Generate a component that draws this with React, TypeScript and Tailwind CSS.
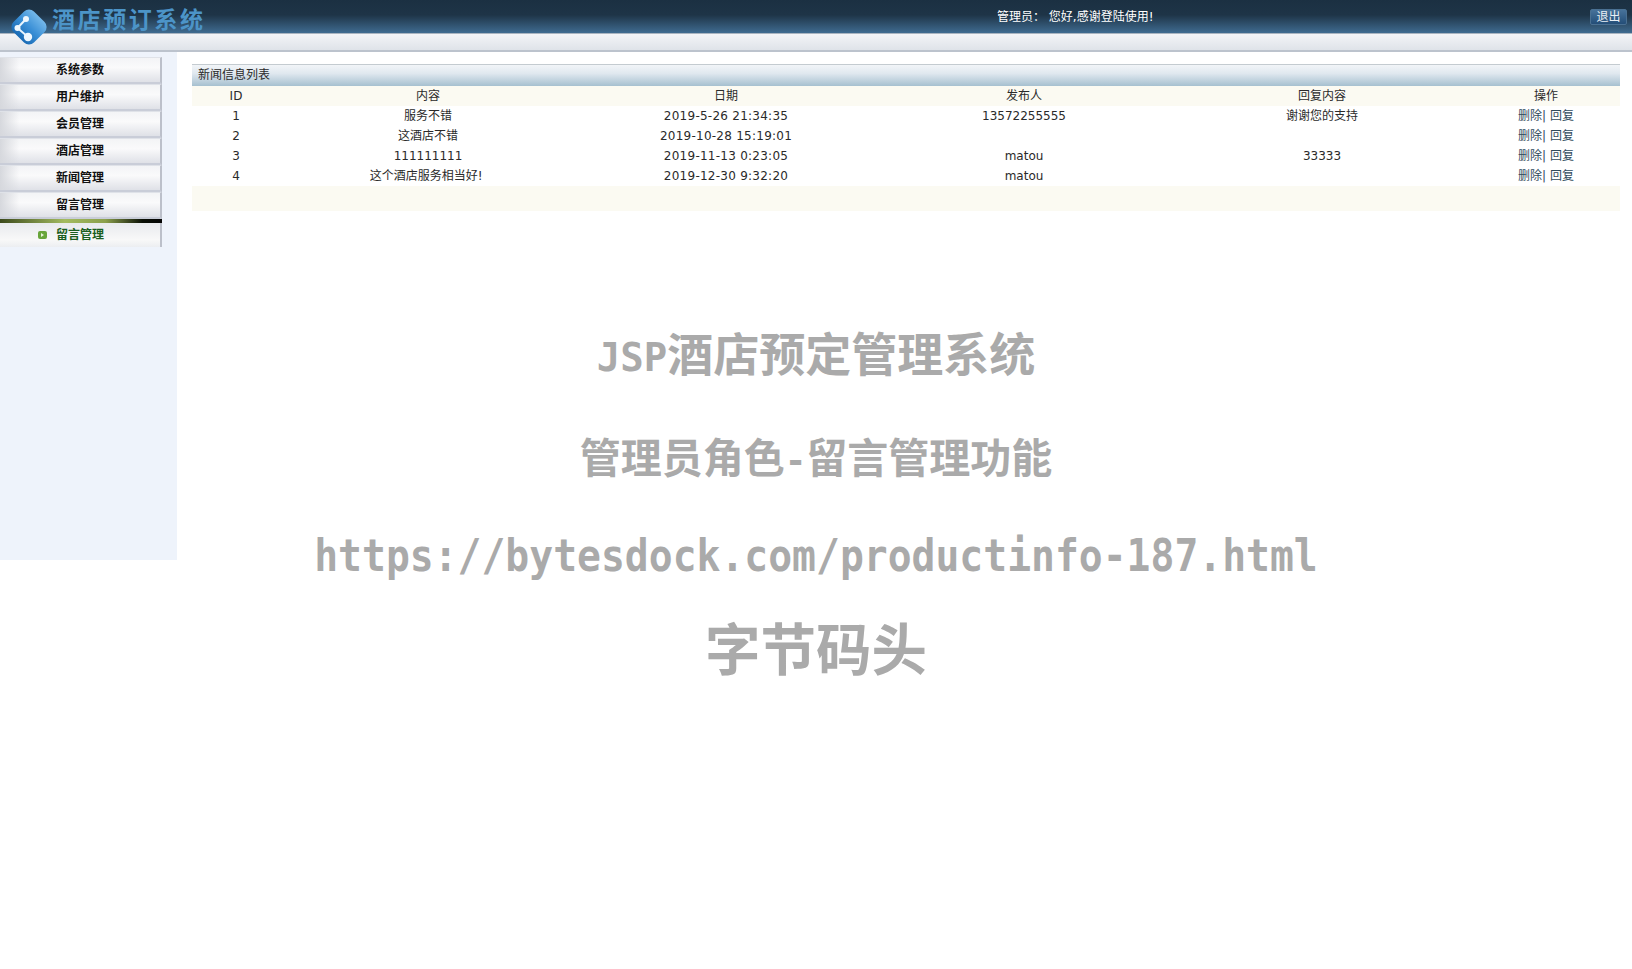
const cjk = "font-['DejaVu_Sans','Noto_Sans_CJK_SC',sans-serif]";
const mark = "font-['DejaVu_Sans_Mono','Noto_Sans_CJK_SC',monospace]";

const menuItems = ["系统参数", "用户维护", "会员管理", "酒店管理", "新闻管理", "留言管理"];

const rows = [
  { id: "1", content: "服务不错", date: "2019-5-26 21:34:35", author: "13572255555", reply: "谢谢您的支持" },
  { id: "2", content: "这酒店不错", date: "2019-10-28 15:19:01", author: "", reply: "" },
  { id: "3", content: "111111111", date: "2019-11-13 0:23:05", author: "matou", reply: "33333" },
  { id: "4", content: "这个酒店服务相当好!\u00a0", date: "2019-12-30 9:32:20", author: "matou", reply: "" },
];

const cols = "grid grid-cols-[88px_296px_300px_296px_300px_148px] text-center";

function Logo() {
  return (
    <svg width="40" height="40" viewBox="0 0 40 40" className="absolute left-[9px] top-[7px]">
      <defs>
        <linearGradient id="logoFill" x1="0" y1="0" x2="0" y2="1">
          <stop offset="0" stopColor="#74b8ea" />
          <stop offset="0.5" stopColor="#3a8fd6" />
          <stop offset="1" stopColor="#1a6bb5" />
        </linearGradient>
      </defs>
      <rect x="5.5" y="5.5" width="29" height="29" rx="7" transform="rotate(45 20 20)" fill="url(#logoFill)" />
      <path d="M17 12 L8.5 21 L19 30" stroke="#e8f4fd" strokeWidth="2" fill="none" />
      <circle cx="17" cy="12" r="3" fill="#eef7fe" />
      <circle cx="8.5" cy="21" r="3" fill="#eef7fe" />
      <circle cx="19" cy="30" r="4.2" fill="#eef7fe" />
    </svg>
  );
}

function Header() {
  return (
    <div className="relative">
      <div className="flex h-[33px] bg-[linear-gradient(#1b3042_0%,#1e3447_45%,#3f6b90_100%)]">
        <div className="w-[997px] pl-[52px] pt-[4px] font-['Noto_Sans_CJK_SC',sans-serif] text-[23px] font-bold leading-[28px] tracking-[2.6px] text-[#4c94c8]">
          酒店预订系统
        </div>
        <div className={`flex-1 pt-[9px] text-[12px] leading-[16px] text-white ${cjk}`}>
          管理员： 您好,感谢登陆使用!
        </div>
        <div className="pr-[5px] pt-[9px]">
          <div className={`flex h-[16px] w-[37px] items-center justify-center rounded-[2px] border border-[#4a7092] bg-[linear-gradient(#47729a,#244e78)] text-[12px] text-[#e8eef4] ${cjk}`}>
            退出
          </div>
        </div>
      </div>
      <div className="h-[19px] border-t border-[#a9b4c0] border-b-2 border-b-[#bcc3cd] bg-[linear-gradient(#f3f4f7,#dfe3e9)]" />
      <Logo />
    </div>
  );
}

function MenuButton({ label }: { label: string }) {
  return (
    <div className={`flex h-[27px] w-[162px] items-center justify-center border-t border-t-[#dfe2e8] border-r-2 border-r-[#bcc0ca] border-b-2 border-b-[#c9cdd8] bg-[linear-gradient(90deg,#d6d8dd,transparent_12%),linear-gradient(#f3f4f6,#fafafb_40%,#dfe1e7)] text-[12px] font-bold text-[#111] ${cjk}`}>
      {label}
    </div>
  );
}

function Sidebar() {
  return (
    <div className="h-[508px] w-[177px] shrink-0 bg-[#eef3fb] pt-[5px]">
      {menuItems.map((item) => (
        <MenuButton key={item} label={item} />
      ))}
      <div className="h-[4px] w-[162px] bg-[linear-gradient(90deg,#3c4a1c_0%,#a3bb60_40%,#8ba04c_65%,#0a0f05_88%,#050505_100%)]" />
      <div className={`relative flex h-[24px] w-[162px] items-center justify-center border-r-2 border-r-[#bcc0ca] bg-[linear-gradient(#e8eaee,#f8f8f8_70%,#eceef1)] text-[12px] font-bold text-[#1a5e20] ${cjk}`}>
        <span className="absolute left-[38px] top-[8px] h-[8px] w-[9px] rounded-[2px] bg-[#68a53a]">
          <span className="absolute left-[3px] top-[2px] h-0 w-0 border-y-[2px] border-l-[3px] border-y-transparent border-l-[#e8f3d8]" />
        </span>
        留言管理
      </div>
    </div>
  );
}

function NewsTable() {
  return (
    <div className={`ml-[15px] mt-[12px] w-[1428px] text-[12px] text-[#2a2a2a] ${cjk}`}>
      <div className="h-[22px] border-t border-[#c4cbd0] bg-[linear-gradient(#f2f5f8,#e0e8ef_40%,#a6c0d0_100%)] pl-[6px] leading-[20px]">
        新闻信息列表
      </div>
      <div className={`${cols} h-[20px] bg-[#fbfaf2] leading-[21px]`}>
        <div>ID</div>
        <div>内容</div>
        <div>日期</div>
        <div>发布人</div>
        <div>回复内容</div>
        <div>操作</div>
      </div>
      {rows.map((row) => (
        <div key={row.id} className={`${cols} h-[20px] leading-[20px]`}>
          <div>{row.id}</div>
          <div>{row.content}</div>
          <div className="tracking-[0.25px]">{row.date}</div>
          <div>{row.author}</div>
          <div>{row.reply}</div>
          <div className="text-[#2f4a5c]">删除| 回复</div>
        </div>
      ))}
      <div className="h-[25px] bg-[#fbfaf2]" />
    </div>
  );
}

function Watermark() {
  return (
    <div className="pointer-events-none absolute left-0 top-0 w-full text-center font-bold text-[#aaaaaa]">
      <div className={`absolute left-0 right-0 top-[322px] ${mark} text-[46px] leading-[66px]`}>
        <span className="text-[39px]">JSP</span>酒店预定管理系统
      </div>
      <div className={`absolute left-0 right-0 top-[426px] ${mark} text-[41px] leading-[66px]`}>
        管理员角色<span className="text-[36px]">-</span>留言管理功能
      </div>
      <div className={`absolute left-0 right-0 top-[522px] scale-y-[1.12] ${mark} text-[39.7px] leading-[66px]`}>
        https://bytesdock.com/productinfo-187.html
      </div>
      <div className="absolute left-0 right-0 top-[607px] font-['Noto_Sans_CJK_SC',sans-serif] text-[55.5px] leading-[78px]">
        字节码头
      </div>
    </div>
  );
}

export default function App() {
  return (
    <div className="relative h-[969px] w-[1632px] overflow-hidden bg-white">
      <Header />
      <div className="flex">
        <Sidebar />
        <NewsTable />
      </div>
      <Watermark />
    </div>
  );
}
